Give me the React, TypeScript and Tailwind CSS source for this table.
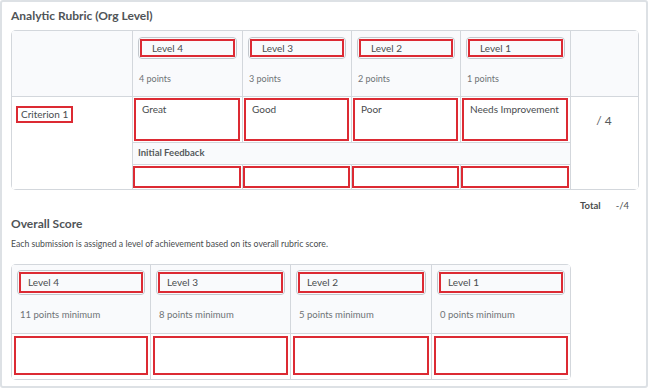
const rubricLevels = [
  { name: "Level 4", points: "4 points", descriptor: "Great" },
  { name: "Level 3", points: "3 points", descriptor: "Good" },
  { name: "Level 2", points: "2 points", descriptor: "Poor" },
  { name: "Level 1", points: "1 points", descriptor: "Needs Improvement" },
];

const overallLevels = [
  { name: "Level 4", range: "11 points minimum" },
  { name: "Level 3", range: "8 points minimum" },
  { name: "Level 2", range: "5 points minimum" },
  { name: "Level 1", range: "0 points minimum" },
];

// gray rounded input with the red outline inside it
const LevelInput = ({ label, tall }: { label: string; tall?: boolean }) => (
  <div className="rounded-[4px] border border-[#c3c8cd] p-px">
    <div
      className={`flex items-center border-2 border-[#dc2a33] text-[10px] text-[#494c4e] ${
        tall ? "h-[21px] pl-[7px]" : "h-[18px] pl-[10px]"
      }`}
    >
      {label}
    </div>
  </div>
);

export default function App() {
  return (
    <div className="w-[648px] h-[388px] bg-white border-2 border-[#dde1e5] rounded-[3px] px-[9px] font-[Lato,sans-serif] text-[#494c4e]">
      <div className="h-[28px] flex items-center text-[12px] font-bold text-[#505457]">
        Analytic Rubric (Org Level)
      </div>

      {/* criteria table */}
      <div className="w-[628px] grid grid-cols-[120px_109px_108px_108px_109px_1fr] grid-rows-[65px_45px_21px_24px] gap-px p-px bg-[#d3d7dc] rounded-[5px] overflow-hidden">
        <div className="bg-[#f9fafc]" />
        {rubricLevels.map((level) => (
          <div key={level.name} className="bg-[#f9fafc] pt-[6px] px-[5px]">
            <LevelInput label={level.name} />
            <div className="mt-[14px] pl-px leading-[12px] text-[9px] text-[#6e7376]">
              {level.points}
            </div>
          </div>
        ))}
        <div className="bg-[#f9fafc]" />

        <div className="row-span-3 bg-white pl-[4px] pt-[3px]">
          <div className="inline-flex h-[17px] items-center border-2 border-[#dc2a33] px-[3px] text-[10px]">
            Criterion 1
          </div>
        </div>
        {rubricLevels.map((level) => (
          <div key={level.descriptor} className="bg-white pl-px pr-[2px] py-px">
            <div className="h-full border-2 border-[#dc2a33] pl-[6px] pt-[3px] text-[10px] leading-[12px]">
              {level.descriptor}
            </div>
          </div>
        ))}
        <div className="row-span-3 bg-white pt-[18px] pr-px text-center text-[12px] leading-[12px] text-[#565a5c]">
          / 4
        </div>

        <div className="col-span-4 bg-[#f9fafc] flex items-center pl-[5px] text-[9.5px] font-bold text-[#565a5c]">
          Initial Feedback
        </div>

        {rubricLevels.map((level) => (
          <div key={level.name + "-fb"} className="bg-white pr-px py-px">
            <div className="h-full border-2 border-[#dc2a33]" />
          </div>
        ))}
      </div>

      <div className="mt-[4px] h-[24px] flex items-center justify-end pr-[8px] text-[9.5px]">
        <span className="font-bold">Total</span>
        <span className="ml-[15px]">-/4</span>
      </div>

      <div className="h-[12px] flex items-center text-[12px] font-bold text-[#505457]">
        Overall Score
      </div>
      <div className="mt-[8px] leading-[12px] text-[8.7px]">
        Each submission is assigned a level of achievement based on its overall rubric score.
      </div>

      {/* overall score levels */}
      <div className="mt-[14px] w-[560px] grid grid-cols-[138px_139px_140px_1fr] grid-rows-[68px_45px] gap-px p-px bg-[#d3d7dc] rounded-[5px] overflow-hidden">
        {overallLevels.map((level) => (
          <div key={level.name} className="bg-[#f9fafc] pt-[5px] px-[5px]">
            <LevelInput label={level.name} tall />
            <div className="mt-[14px] pl-[3px] leading-[12px] text-[9.5px] text-[#6e7376]">
              {level.range}
            </div>
          </div>
        ))}
        {overallLevels.map((level) => (
          <div key={level.name + "-box"} className="bg-white px-[2px] pt-[2px] pb-[4px]">
            <div className="h-full border-2 border-[#dc2a33]" />
          </div>
        ))}
      </div>
    </div>
  );
}
